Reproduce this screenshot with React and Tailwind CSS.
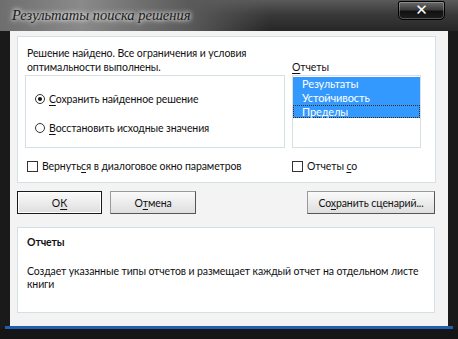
import React from "react";

const U = ({ children }) => <span className="underline underline-offset-[2px]">{children}</span>;

function Radio({ checked }) {
  return (
    <span className="w-[10px] h-[10px] rounded-full border border-[#333] bg-white flex items-center justify-center shrink-0">
      {checked && <span className="w-[4px] h-[4px] rounded-full bg-[#111]" />}
    </span>
  );
}

function Check() {
  return <span className="w-[11px] h-[11px] border border-[#333] bg-white shrink-0" />;
}

export default function App() {
  return (
    <div
      className="w-[458px] h-[339px] flex flex-col bg-[#1a1a1a] overflow-hidden text-[#111]"
      style={{ fontFamily: 'Lato, "Open Sans", sans-serif' }}
    >
      {/* Title bar */}
      <div className="h-[31px] flex items-start justify-between bg-[linear-gradient(180deg,#5a5a5a_0%,#3a3a3a_45%,#262626_100%)]">
        <div className="h-[31px] flex items-center pl-[12px] pr-[80px] bg-[linear-gradient(90deg,#6e6e6e_0%,#8a8a8a_30%,#5a5a5a_70%,rgba(60,60,60,0)_100%)]">
          <span
            className="text-[14.5px] italic text-[#1a1a1a]"
            style={{ fontFamily: '"Liberation Serif", serif', textShadow: "0 0 4px #fff, 0 0 6px #ddd" }}
          >
            Результаты поиска решения
          </span>
        </div>
        <div className="mr-[13px] mt-[1px] w-[47px] h-[19px] rounded-b-[5px] rounded-t-[2px] border border-black bg-[linear-gradient(180deg,#6a6a6a_0%,#3c3c3c_45%,#111_55%,#1e1e1e_100%)] shadow-[inset_0_0_0_1px_rgba(255,255,255,0.25)] flex items-center justify-center">
          <span className="text-white font-bold text-[15px] leading-none" style={{ fontFamily: '"DejaVu Sans", sans-serif' }}>✕</span>
        </div>
      </div>

      {/* Client */}
      <div className="mx-[10px] h-[295px] bg-[#f3f3f3] pl-[7px] pt-[5px] flex flex-col text-[10.5px] tracking-[-0.1px] leading-[14px]">
        {/* Top panel */}
        <div className="w-[419px] h-[147px] bg-white border border-[#d5dfe6] px-[7px] pt-[9px]">
          <div className="flex">
            <div className="w-[267px] flex flex-col">
              <div className="pl-[2px]">
                <div>Решение найдено. Все ограничения и условия</div>
                <div>оптимальности выполнены.</div>
              </div>
              <div className="mt-[1px] w-[260px] h-[73px] border border-[#d5dfe6] flex flex-col pl-[9px] pt-[16px] gap-[15px]">
                <div className="flex items-center gap-[4px]">
                  <Radio checked />
                  <span><U>С</U>охранить найденное решение</span>
                </div>
                <div className="flex items-center gap-[4px]">
                  <Radio />
                  <span><U>В</U>осстановить исходные значения</span>
                </div>
              </div>
            </div>
            <div className="flex flex-col pt-[14px]">
              <div className="h-[15px]"><U>О</U>тчеты</div>
              <div className="w-[129px] h-[73px] border border-[#d5dfe6] bg-white pt-[1px] text-[11px]">
                <div className="bg-[#3399ff] text-white">
                  <div className="h-[14px] pl-[9px] leading-[14px]">Результаты</div>
                  <div className="h-[14px] pl-[9px] leading-[14px]">Устойчивость</div>
                  <div className="h-[13px] pl-[8px] leading-[11px] border border-dotted border-[#3a2a10]">Пределы</div>
                </div>
              </div>
            </div>
          </div>
          <div className="flex mt-[11px]">
            <div className="w-[267px] flex items-center gap-[4px] pl-[2px]">
              <Check />
              <span>Вернуть<U>с</U>я в диалоговое окно параметров</span>
            </div>
            <div className="flex items-center gap-[4px]">
              <Check />
              <span>Отчеты <U>с</U>о</span>
            </div>
          </div>
        </div>

        {/* Buttons */}
        <div className="mt-[8px] flex items-center h-[23px] w-[418px]">
          <button className="w-[85px] h-[23px] border border-[#1a1a1a] shadow-[inset_0_0_0_1px_#fff] bg-[linear-gradient(180deg,#fafafa_0%,#ececec_50%,#dedede_100%)] whitespace-nowrap">
            О<U>К</U>
          </button>
          <button className="ml-[8px] w-[86px] h-[23px] border border-[#9a9a9a] border-b-[#555] border-r-[#555] bg-[linear-gradient(180deg,#fafafa_0%,#ececec_50%,#dedede_100%)] whitespace-nowrap">
            О<U>т</U>мена
          </button>
          <div className="flex-1" />
          <button className="w-[128px] h-[23px] border border-[#9a9a9a] border-b-[#555] border-r-[#555] bg-[linear-gradient(180deg,#fafafa_0%,#ececec_50%,#dedede_100%)] whitespace-nowrap">
            Со<U>х</U>ранить сценарий...
          </button>
        </div>

        {/* Bottom panel */}
        <div className="mt-[13px] w-[418px] h-[86px] bg-white border border-[#d5dfe6] px-[9px] pt-[7px]">
          <div className="font-bold">Отчеты</div>
          <div className="mt-[16px] leading-[13px]">
            Создает указанные типы отчетов и размещает каждый отчет на отдельном листе книги
          </div>
        </div>
      </div>

      {/* Blue line */}
      <div className="mx-[5px] h-[3px] bg-[#1f5fae]" />
      <div className="flex-1 bg-[#151515]" />
    </div>
  );
}
